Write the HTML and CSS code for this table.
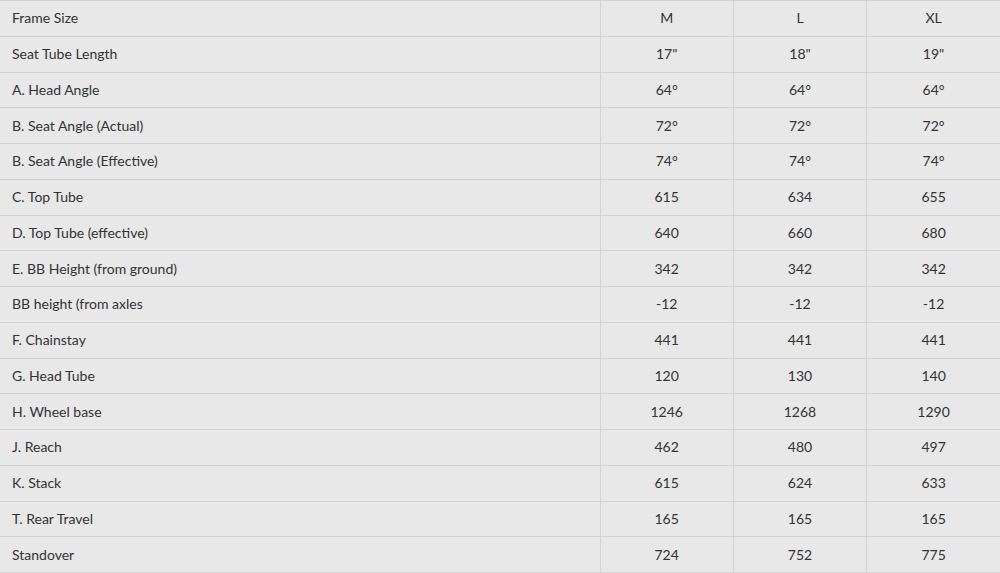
FILE: index.html
```html
<!DOCTYPE html>
<html>
<head>
<meta charset="utf-8">
<link rel="stylesheet" href="styles.css">
</head>
<body>
<table class="geo">
  <colgroup>
    <col class="c-label">
    <col class="c-size">
    <col class="c-size">
    <col class="c-size">
  </colgroup>
  <tbody>
    <tr><td>Frame Size</td><td>M</td><td>L</td><td>XL</td></tr>
    <tr><td>Seat Tube Length</td><td>17"</td><td>18"</td><td>19"</td></tr>
    <tr><td>A. Head Angle</td><td>64°</td><td>64°</td><td>64°</td></tr>
    <tr><td>B. Seat Angle (Actual)</td><td>72°</td><td>72°</td><td>72°</td></tr>
    <tr><td>B. Seat Angle (Effective)</td><td>74°</td><td>74°</td><td>74°</td></tr>
    <tr><td>C. Top Tube</td><td>615</td><td>634</td><td>655</td></tr>
    <tr><td>D. Top Tube (effective)</td><td>640</td><td>660</td><td>680</td></tr>
    <tr><td>E. BB Height (from ground)</td><td>342</td><td>342</td><td>342</td></tr>
    <tr><td>BB height (from axles</td><td>-12</td><td>-12</td><td>-12</td></tr>
    <tr><td>F. Chainstay</td><td>441</td><td>441</td><td>441</td></tr>
    <tr><td>G. Head Tube</td><td>120</td><td>130</td><td>140</td></tr>
    <tr><td>H. Wheel base</td><td>1246</td><td>1268</td><td>1290</td></tr>
    <tr><td>J. Reach</td><td>462</td><td>480</td><td>497</td></tr>
    <tr><td>K. Stack</td><td>615</td><td>624</td><td>633</td></tr>
    <tr><td>T. Rear Travel</td><td>165</td><td>165</td><td>165</td></tr>
    <tr><td>Standover</td><td>724</td><td>752</td><td>775</td></tr>
  </tbody>
</table>
</body>
</html>
```
FILE: styles.css
```css
html, body {
  margin: 0;
  padding: 0;
  background: #e8e8e8;
}
.geo {
  width: 1000px;
  border-collapse: collapse;
  table-layout: fixed;
  font-family: Lato, "Noto Sans", sans-serif;
  font-size: 14px;
  color: #333333;
  background: #e8e8e8;
}
.c-label { width: 600px; }
.c-size { width: 133.33px; }
.geo td {
  height: 35.75px;
  padding: 0 12px;
  border-top: 1px solid #d3d3d3;
  border-bottom: 1px solid #d3d3d3;
  border-left: 1px solid #d3d3d3;
  text-align: center;
  vertical-align: middle;
  box-sizing: border-box;
  line-height: 1;
}
.geo td:first-child {
  text-align: left;
  border-left: none;
}
```
